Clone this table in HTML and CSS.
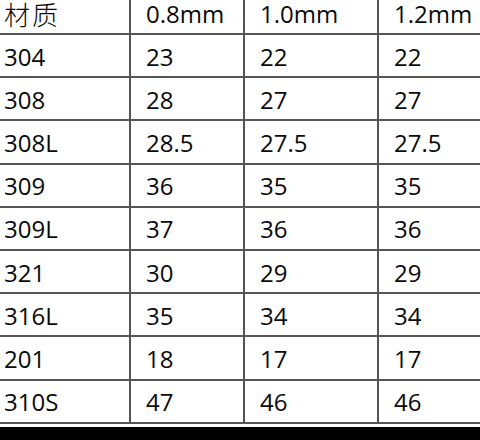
FILE: index.html
```html
<!DOCTYPE html>
<html>
<head>
<meta charset="utf-8">
<link rel="stylesheet" href="styles.css">
</head>
<body>
<div class="sheet">
  <div class="grid">
    <div class="cell head first"><span class="cjk">材质</span></div>
    <div class="cell head">0.8mm</div>
    <div class="cell head">1.0mm</div>
    <div class="cell head last">1.2mm</div>

    <div class="cell first">304</div><div class="cell">23</div><div class="cell">22</div><div class="cell last">22</div>
    <div class="cell first">308</div><div class="cell">28</div><div class="cell">27</div><div class="cell last">27</div>
    <div class="cell first">308L</div><div class="cell">28.5</div><div class="cell">27.5</div><div class="cell last">27.5</div>
    <div class="cell first">309</div><div class="cell">36</div><div class="cell">35</div><div class="cell last">35</div>
    <div class="cell first">309L</div><div class="cell">37</div><div class="cell">36</div><div class="cell last">36</div>
    <div class="cell first">321</div><div class="cell">30</div><div class="cell">29</div><div class="cell last">29</div>
    <div class="cell first">316L</div><div class="cell">35</div><div class="cell">34</div><div class="cell last">34</div>
    <div class="cell first">201</div><div class="cell">18</div><div class="cell">17</div><div class="cell last">17</div>
    <div class="cell first">310S</div><div class="cell">47</div><div class="cell">46</div><div class="cell last">46</div>
  </div>
  <div class="bar"></div>
</div>
</body>
</html>
```
FILE: styles.css
```css
html, body {
  margin: 0;
  padding: 0;
  background: #fff;
  overflow: hidden;
}
.sheet {
  width: 480px;
  height: 440px;
  overflow: hidden;
  display: flex;
  flex-direction: column;
}
.grid {
  display: grid;
  grid-template-columns: 131px 114px 134px 134px;
  grid-template-rows: 35px repeat(9, 43.2px);
  width: 513px;
  font-family: "Open Sans", "Noto Sans CJK SC", sans-serif;
  font-size: 24px;
  color: #0a0a0a;
}
.cell {
  box-sizing: border-box;
  display: flex;
  align-items: center;
  padding-left: 15px;
  padding-top: 2px;
  border-right: 2px solid #555;
  border-bottom: 2px solid #555;
  line-height: 1;
  white-space: nowrap;
}
.cell.first {
  padding-left: 4px;
}
.cell.head {
  padding-top: 0;
  padding-bottom: 5px;
}
.cjk {
  font-family: "Noto Sans CJK SC", sans-serif;
  font-size: 26px;
  font-weight: 300;
  letter-spacing: 2px;
}
.bar {
  margin-top: 3px;
  height: 20px;
  background: #000;
}
```
